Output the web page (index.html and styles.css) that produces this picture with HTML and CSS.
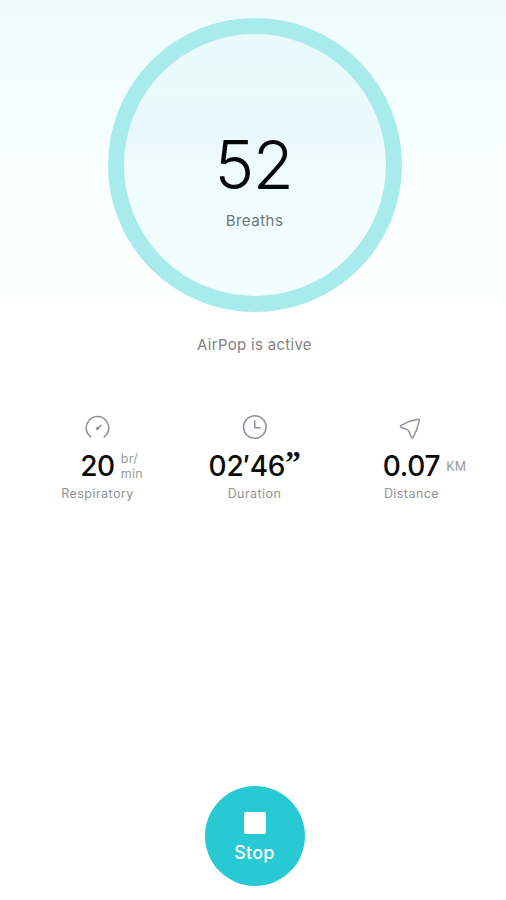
FILE: index.html
```html
<!DOCTYPE html>
<html lang="en">
<head>
  <meta charset="UTF-8" />
  <title>AirPop</title>
  <meta name="viewport" content="width=device-width, initial-scale=1.0" />
  <link rel="stylesheet" href="styles.css">
</head>
<body>
  <main class="screen">
    <div class="ring">
      <div class="ring-count">52</div>
      <div class="ring-label">Breaths</div>
    </div>

    <p class="status">AirPop is active</p>

    <div class="stats">
      <div class="stat">
        <svg class="icon" viewBox="0 0 26 26">
          <path d="M5.8 22.9A11.3 11.3 0 1 1 19.2 22.9" />
          <path d="M16.1 11.3L13 14.1" />
          <circle class="dot" cx="12.4" cy="14.6" r="1.7" />
        </svg>
        <div class="value"><span class="num">20</span><span class="unit">br/<br>min</span></div>
        <div class="label">Respiratory</div>
      </div>
      <div class="stat">
        <svg class="icon" viewBox="0 0 26 26">
          <circle cx="12.8" cy="13" r="11.3" />
          <path d="M12.8 6.7V13.8H18.2" />
        </svg>
        <div class="value"><span class="num">02′46<span class="sec">”</span></span></div>
        <div class="label">Duration</div>
      </div>
      <div class="stat">
        <svg class="icon" viewBox="0 0 26 26">
          <path d="M19.4 5.2L9.6 7.6L2.2 11.4C1 12.1 1.1 13 2.4 13.5L7.8 15.4Q9.3 15.9 9.9 17.4L12.1 22.9C12.7 24.3 13.7 24.2 14.3 22.9L17.6 15.9L20.4 6.4Q20.6 5 19.4 5.2Z" />
        </svg>
        <div class="value"><span class="num">0.07</span><span class="unit">KM</span></div>
        <div class="label">Distance</div>
      </div>
    </div>

    <button class="stop">
      <span class="stop-icon"></span>
      Stop
    </button>
  </main>
</body>
</html>
```
FILE: styles.css
```css
body {
  margin: 0;
  background: #fff;
  font-family: Inter, "Liberation Sans", sans-serif;
}
.screen {
  box-sizing: border-box;
  height: 900px;
  padding: 18px 0 14px 3px;
  display: flex;
  flex-direction: column;
  align-items: center;
  background: linear-gradient(#edfafd 0, #effdfe 40px, #f4feff 120px, #fafeff 200px, #fff 325px);
}
.ring {
  box-sizing: border-box;
  width: 294px;
  height: 294px;
  padding-top: 96px;
  border: 16px solid #a7ebec;
  border-radius: 50%;
  background: linear-gradient(#eaf9fd 0, #ebfafc 60px, #e9f8fe 95px, #effcfe 135px, #f2fdfe 100%);
  text-align: center;
}
.ring-count {
  font-size: 67px;
  font-weight: 300;
  line-height: 70px;
  letter-spacing: -1.5px;
  text-indent: -2px;
  color: #050808;
}
.ring-label {
  margin-top: 11px;
  font-size: 15px;
  line-height: 20px;
  letter-spacing: 0.5px;
  color: #6d7778;
}
.status {
  margin: 23px 0 0;
  font-size: 15px;
  line-height: 20px;
  letter-spacing: 0.3px;
  color: #828282;
}
.stats {
  display: grid;
  grid-template-columns: repeat(3, 157px);
  margin-top: 59px;
}
.stat {
  display: flex;
  flex-direction: column;
  align-items: center;
}
.icon {
  width: 26px;
  height: 26px;
  fill: none;
  stroke: #8e8fa2;
  stroke-width: 1.5;
  stroke-linecap: round;
  stroke-linejoin: round;
}
.icon .dot {
  fill: #8e8fa2;
  stroke: none;
}
.value {
  display: flex;
  align-items: center;
  height: 34px;
  margin-top: 9px;
}
.num {
  font-size: 28px;
  font-weight: 500;
  line-height: 34px;
  letter-spacing: -0.3px;
  color: #0a0a0a;
}
.sec {
  font-family: "Liberation Serif", serif;
  font-size: 31px;
  font-weight: 700;
  line-height: 1px;
  vertical-align: 3px;
}
/* units hang to the right so the number stays centered */
.unit {
  width: 0;
  margin: 0 -6px 0 6px;
  font-size: 12.5px;
  line-height: 15px;
  letter-spacing: 0.2px;
  color: #999;
}
.label {
  margin-top: 3px;
  font-size: 12.5px;
  line-height: 16px;
  letter-spacing: 0.45px;
  color: #929292;
}
.stop {
  width: 100px;
  height: 100px;
  margin-top: auto;
  padding: 5px 0 0;
  border: 0;
  border-radius: 50%;
  display: flex;
  flex-direction: column;
  align-items: center;
  justify-content: center;
  gap: 7px;
  background: #27cad3;
  color: #fff;
  font-family: inherit;
  font-size: 18px;
  font-weight: 500;
  line-height: 24px;
  letter-spacing: 0.2px;
}
.stop-icon {
  width: 22px;
  height: 22px;
  border-radius: 2px;
  background: #fff;
}
```
